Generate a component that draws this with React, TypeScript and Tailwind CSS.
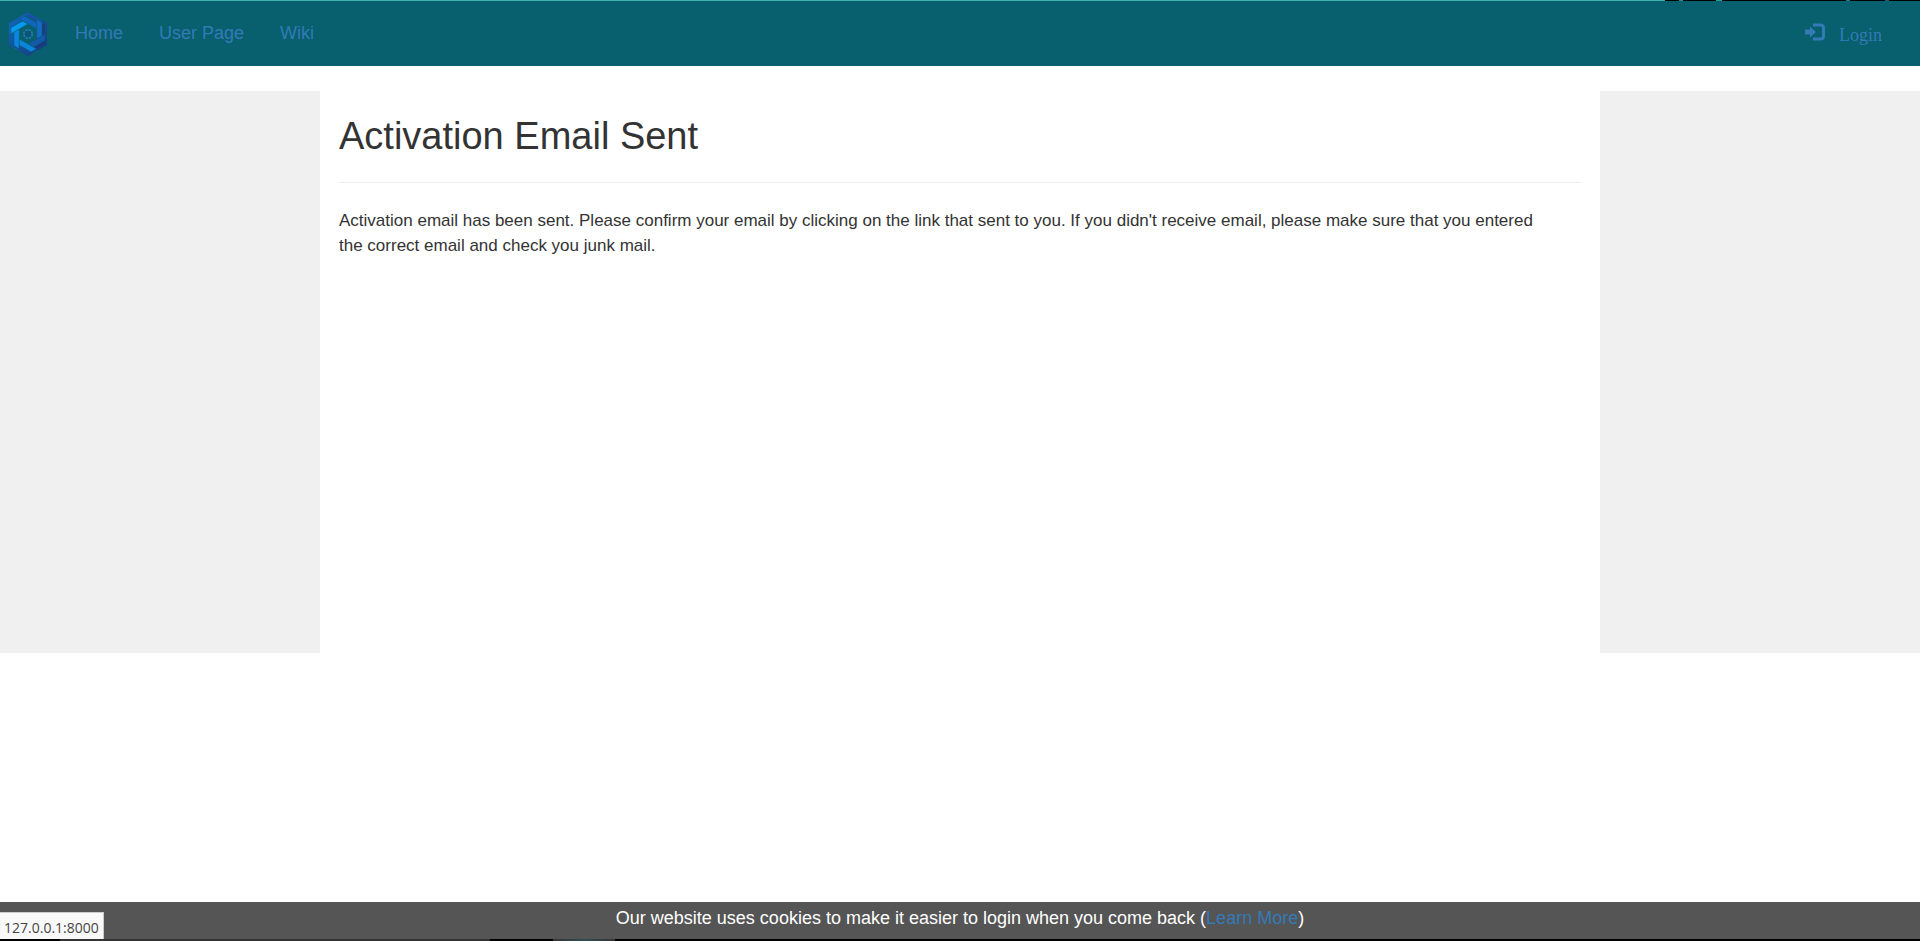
import React from "react";

const navLinks = ["Home", "User Page", "Wiki"];

const blades = [
  { angle: 0, outer: "#1058b0", inner: "#0a86e0" },
  { angle: 60, outer: "#1160b4", inner: "#0798f0" },
  { angle: 120, outer: "#15509c", inner: "#0e66be" },
  { angle: 180, outer: "#183c80", inner: "#126cc6" },
  { angle: 240, outer: "#183a80", inner: "#1458ac" },
  { angle: 300, outer: "#164a94", inner: "#0b84de" },
];

function Logo() {
  return (
    <svg viewBox="-19 -22 38 44" className="h-11 w-[38px]" aria-hidden="true">
      <defs>
        <linearGradient id="rim" x1="0" y1="0" x2="1" y2="1">
          <stop offset="0" stopColor="#1168bc" />
          <stop offset="1" stopColor="#183878" />
        </linearGradient>
      </defs>
      {blades.map(({ angle, outer, inner }) => (
        <g key={angle} transform={`rotate(${angle})`} stroke="#085f6d" strokeWidth="0.5">
          <path d="M-14 -2 -19 1V11L-14 14Z" fill={outer} />
          <path d="M-8.7 -5 -14 -2V14L-8.7 17Z" fill={inner} />
        </g>
      ))}
      <path d="M0 -20.500 17.700 -10.250V10.250L0 20.500 -17.700 10.250V-10.250Z" fill="none" stroke="url(#rim)" strokeWidth="2" />
      <path d="M0 -9 7.800 -4.500V4.500L0 9 -7.800 4.500V-4.500Z" fill="#085f6d" />
      <circle r="4.200" fill="#0b5578" stroke="#2380b4" strokeWidth="1.600" strokeDasharray="2.200 1.100" />
    </svg>
  );
}

function LoginIcon() {
  return (
    <svg viewBox="0 0 20 18" className="h-[18px] w-5" aria-hidden="true">
      <path d="M0 6.500H5V3.500L11 9 5 14.500V11.500H0Z" fill="currentColor" />
      <path d="M8 2H15.500Q18.500 2 18.500 5V13Q18.500 16 15.500 16H8" fill="none" stroke="currentColor" strokeWidth="3" />
    </svg>
  );
}

export default function App() {
  return (
    <div className="flex min-h-screen flex-col bg-white font-['Liberation_Sans',Arial,sans-serif] text-[18px] leading-[25px] text-[#333]">
      <div className="flex h-px bg-black">
        <div className="w-[86.700%] bg-[#3fb0ac]" />
        <div className="ml-[14px] w-1 bg-[#1f8f96]" />
        <div className="ml-[33px] w-1.5 bg-[#1f9f9f]" />
        <div className="mr-[35px] ml-auto w-1 bg-[#147a88]" />
        <div className="mr-[31px] w-1 bg-[#14606a]" />
      </div>
      <header className="flex h-[65px] items-center bg-[#085f6d] pr-[38px] pl-[9px] text-[#337ab7]">
        <a href="#home" aria-label="Site home">
          <Logo />
        </a>
        <nav className="ml-7 flex gap-9">
          {navLinks.map((label) => (
            <a key={label} href="#nav">
              {label}
            </a>
          ))}
        </nav>
        <a href="#login" className="ml-auto flex items-start gap-[14px]">
          <span className="pt-1">
            <LoginIcon />
          </span>
          <span className="pt-1 font-['Liberation_Serif',serif]">Login</span>
        </a>
      </header>

      <div className="mt-[25px] grid grid-cols-[1fr_4fr_1fr]">
        <aside className="min-h-[562px] bg-[#f0f0f0]" />
        <main className="px-[19px] pt-6">
          <h1 className="text-[38px] leading-[42px]">Activation Email Sent</h1>
          <hr className="my-[25px] border-[#eee]" />
          <p className="text-[17px]">
            Activation email has been sent. Please confirm your email by clicking on the link that sent to you. If you
            didn't receive email, please make sure that you entered
            <br />
            the correct email and check you junk mail.
          </p>
        </main>
        <aside className="bg-[#f0f0f0]" />
      </div>

      <footer className="relative mt-auto">
        <p className="bg-[#555] pt-1 pb-2 text-center text-white">
          Our website uses cookies to make it easier to login when you come back (
          <a href="#cookies" className="text-[#337ab7]">
            Learn More
          </a>
          )
        </p>
        <div className="flex h-0.5 bg-black">
          <div className="ml-[3.125%] w-[22.400%] bg-[#333]" />
          <div className="ml-[3.300%] w-[3.200%] bg-linear-to-r from-[#333] via-[#2f4f55] to-[#333]" />
        </div>
        <div className="absolute bottom-0.5 left-0 border-t border-r border-[#ccc] bg-[#f9f9fa] px-1 pt-1 pb-px font-['Open_Sans',sans-serif] text-[14px] leading-[21px] text-[#444]">
          127.0.0.1:8000
        </div>
      </footer>
    </div>
  );
}
